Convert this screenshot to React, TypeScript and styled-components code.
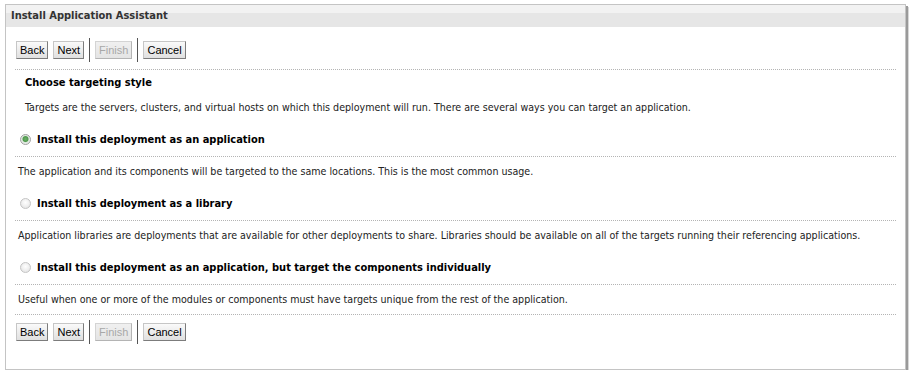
import React from 'react';
import styled, { createGlobalStyle } from 'styled-components';

const GlobalStyle = createGlobalStyle`
  html, body {
    margin: 0;
    padding: 0;
    background: #ffffff;
  }
`;

const Panel = styled.div`
  margin: 4px 0 0 5px;
  width: 899px;
  border: 1px solid #c4c4c4;
  box-shadow: 2px 2px 0 #9a9a9a, 3px 3px 0 #d8d8d8;
  background: #ffffff;
  padding-bottom: 25px;
  font-family: 'DejaVu Sans Condensed', 'DejaVu Sans', sans-serif;
  color: #222;
`;

const Header = styled.div`
  height: 22px;
  line-height: 22px;
  padding-left: 5px;
  background: linear-gradient(#f2f2f2 0, #f2f2f2 8px, #e6e6e6 8px, #e6e6e6 100%);
  font-weight: bold;
  font-size: 11px;
  color: #333;
`;

const Toolbar = styled.div<{ $top: number }>`
  display: flex;
  align-items: center;
  height: 24px;
  margin: ${(p) => p.$top}px 0 0 10px;
  gap: 5px;
`;

const Button = styled.button`
  height: 18px;
  padding: 0 3px;
  border: 1px solid;
  border-color: #c6c6c6 #7c7c7c #7c7c7c #c6c6c6;
  border-radius: 0;
  background: linear-gradient(#fafafa, #e0e0e0);
  font-family: 'Liberation Sans', Arial, sans-serif;
  font-size: 11px;
  color: #000;
  line-height: 16px;

  &:disabled {
    color: #a8a8a8;
    border-color: #d4d4d4 #b4b4b4 #b4b4b4 #d4d4d4;
    background: linear-gradient(#f0f0f0, #e4e4e4);
  }
`;

const Separator = styled.span`
  width: 1px;
  height: 24px;
  background: #555;
`;

const Divider = styled.div<{ $top: number }>`
  margin: ${(p) => p.$top}px 9px 0 9px;
  border-top: 1px dotted #b4b4b4;
`;

const Title = styled.div`
  margin: 5px 0 0 19px;
  line-height: 16px;
  font-size: 11px;
  font-weight: bold;
  color: #000;
`;

const Text = styled.div<{ $top: number; $left: number }>`
  margin: ${(p) => p.$top}px 0 0 ${(p) => p.$left}px;
  line-height: 16px;
  font-size: 10.6px;
  color: #222;
`;

const OptionRow = styled.label`
  display: flex;
  align-items: center;
  gap: 6px;
  margin: 16px 0 0 14px;
  height: 16px;
  font-size: 11px;
  font-weight: bold;
  color: #000;
`;

const Radio = styled.span<{ $checked: boolean }>`
  width: 11px;
  height: 11px;
  box-sizing: border-box;
  border-radius: 50%;
  border: 1px solid ${(p) => (p.$checked ? '#a0a0a0' : '#c4c4c4')};
  background: ${(p) =>
    p.$checked
      ? 'radial-gradient(circle at 50% 45%, #6fae6c 0, #4f9a4c 2.5px, #dfe7df 3.5px, #f4f4f4 100%)'
      : 'radial-gradient(circle at 50% 40%, #ffffff 0, #f2f2f2 3px, #dedede 100%)'};
`;

const options = [
  {
    label: 'Install this deployment as an application',
    desc: 'The application and its components will be targeted to the same locations. This is the most common usage.',
    checked: true,
  },
  {
    label: 'Install this deployment as a library',
    desc: 'Application libraries are deployments that are available for other deployments to share. Libraries should be available on all of the targets running their referencing applications.',
    checked: false,
  },
  {
    label: 'Install this deployment as an application, but target the components individually',
    desc: 'Useful when one or more of the modules or components must have targets unique from the rest of the application.',
    checked: false,
  },
];

const Buttons: React.FC<{ top: number }> = ({ top }) => (
  <Toolbar $top={top}>
    <Button>Back</Button>
    <Button>Next</Button>
    <Separator />
    <Button disabled>Finish</Button>
    <Separator />
    <Button>Cancel</Button>
  </Toolbar>
);

const App: React.FC = () => {
  return (
    <>
      <GlobalStyle />
      <Panel>
        <Header>Install Application Assistant</Header>
        <Buttons top={11} />
        <Divider $top={7} />
        <Title>Choose targeting style</Title>
        <Text $top={8} $left={19}>
          Targets are the servers, clusters, and virtual hosts on which this deployment will run. There are several
          ways you can target an application.
        </Text>
        {options.map((o) => (
          <React.Fragment key={o.label}>
            <OptionRow>
              <Radio $checked={o.checked} />
              {o.label}
            </OptionRow>
            <Divider $top={9} />
            <Text $top={6} $left={12}>
              {o.desc}
            </Text>
          </React.Fragment>
        ))}
        <Divider $top={7} />
        <Buttons top={5} />
      </Panel>
    </>
  );
};

export default App;
